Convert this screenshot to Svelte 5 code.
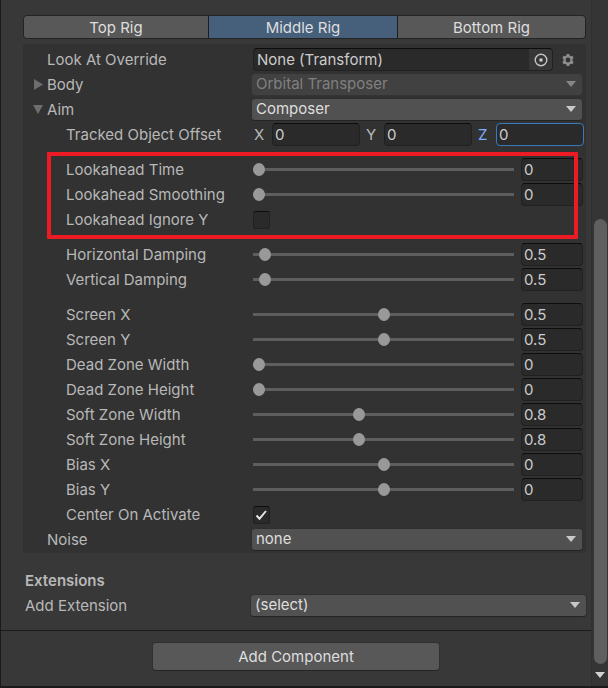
<script lang="ts">
  type Slider = { label: string; min: number; max: number; value: number }

  let tabs = ['Top Rig', 'Middle Rig', 'Bottom Rig']
  let activeTab = $state('Middle Rig')

  let offset = $state([
    { axis: 'X', value: '0' },
    { axis: 'Y', value: '0' },
    { axis: 'Z', value: '0' },
  ])
  let activeAxis = $state('Z')

  let lookahead: Slider[] = $state([
    { label: 'Lookahead Time', min: 0, max: 1, value: 0 },
    { label: 'Lookahead Smoothing', min: 0, max: 30, value: 0 },
  ])
  let damping: Slider[] = $state([
    { label: 'Horizontal Damping', min: 0, max: 20, value: 0.5 },
    { label: 'Vertical Damping', min: 0, max: 20, value: 0.5 },
  ])
  let zones: Slider[] = $state([
    { label: 'Screen X', min: -0.5, max: 1.5, value: 0.5 },
    { label: 'Screen Y', min: -0.5, max: 1.5, value: 0.5 },
    { label: 'Dead Zone Width', min: 0, max: 2, value: 0 },
    { label: 'Dead Zone Height', min: 0, max: 2, value: 0 },
    { label: 'Soft Zone Width', min: 0, max: 2, value: 0.8 },
    { label: 'Soft Zone Height', min: 0, max: 2, value: 0.8 },
    { label: 'Bias X', min: -0.5, max: 0.5, value: 0 },
    { label: 'Bias Y', min: -0.5, max: 0.5, value: 0 },
  ])
  let ignoreY = $state(false)
  let centerOnActivate = $state(true)

  // part of the inspector that is visible, in percent
  let visible = 67
</script>

{#snippet slider(s: Slider)}
  {@const id = s.label.toLowerCase().replaceAll(' ', '-')}
  <div class="row">
    <label class="sub" for={id}>{s.label}</label>
    <div class="slider">
      <input type="range" {id} min={s.min} max={s.max} step="0.01" bind:value={s.value} />
      <input class="field" aria-label="{s.label} value" bind:value={s.value} />
    </div>
  </div>
{/snippet}

{#snippet dropdown(id: string, text: string, disabled: boolean)}
  <div class="dropdown" class:disabled>
    <select {id} {disabled}><option>{text}</option></select>
    <svg width="10" height="6" viewBox="0 0 10 6"><path d="M0 0h10L5 6z" /></svg>
  </div>
{/snippet}

{#snippet checkmark()}
  <svg width="17" height="18" viewBox="0 0 17 18">
    <path d="M3.5 9.5l3 3.2L13 5" fill="none" stroke="#e8e8e8" stroke-width="1.9" />
  </svg>
{/snippet}

<div class="window">
  <main>
    <div class="content">
      <div class="tabs">
        {#each tabs as tab}
          <button class:active={tab == activeTab} onclick={() => (activeTab = tab)}>{tab}</button>
        {/each}
      </div>

      <section class="panel">
        <div class="row">
          <label for="look-at">Look At Override</label>
          <div class="object">
            <div class="picker">
              <input id="look-at" value="None (Transform)" readonly />
              <button aria-label="Pick object">
                <svg width="14" height="14" viewBox="0 0 14 14">
                  <circle cx="7" cy="7" r="5.8" fill="none" stroke="#c4c4c4" stroke-width="1.4" />
                  <rect x="5.5" y="5.5" width="3" height="3" fill="#d2d2d2" />
                </svg>
              </button>
            </div>
            <button class="gear" aria-label="Options">
              <svg width="12" height="12" viewBox="0 0 12 12">
                <path
                  fill="#8c8c8c"
                  fill-rule="evenodd"
                  d="M4.7 0h2.6l.4 1.6 1 .6 1.7-.5 1.3 2.2L10.5 5v2l1.2 1.1-1.3 2.2-1.7-.5-1 .6L7.3 12H4.7l-.4-1.6-1-.6-1.7.5L.3 8.1 1.5 7V5L.3 3.9l1.3-2.2 1.7.5 1-.6zM6 3.6a2.4 2.4 0 1 0 0 4.8 2.4 2.4 0 0 0 0-4.8z"
                />
              </svg>
            </button>
          </div>
        </div>
        <div class="row">
          <div class="foldout">
            <button aria-label="Expand Body" aria-expanded="false">
              <svg width="10" height="12" viewBox="0 0 10 12"><path d="M1 0l9 5.5L1 11z" /></svg>
            </button>
            <label for="body">Body</label>
          </div>
          {@render dropdown('body', 'Orbital Transposer', true)}
        </div>
        <div class="row">
          <div class="foldout">
            <button aria-label="Collapse Aim" aria-expanded="true">
              <svg width="10" height="12" viewBox="0 0 10 12"><path d="M0 1h10L5 10z" /></svg>
            </button>
            <label for="aim">Aim</label>
          </div>
          {@render dropdown('aim', 'Composer', false)}
        </div>
        <div class="row">
          <span class="sub">Tracked Object Offset</span>
          <div class="vector">
            {#each offset as o}
              <label class:active={o.axis == activeAxis}>
                <span>{o.axis}</span>
                <input class="field" bind:value={o.value} onfocus={() => (activeAxis = o.axis)} />
              </label>
            {/each}
          </div>
        </div>

        <div class="group marked">
          {#each lookahead as s}
            {@render slider(s)}
          {/each}
          <div class="row">
            <label class="sub" for="ignore-y">Lookahead Ignore Y</label>
            <div class="check">
              <input type="checkbox" id="ignore-y" bind:checked={ignoreY} />
              {#if ignoreY}{@render checkmark()}{/if}
            </div>
          </div>
        </div>

        <div class="group">
          {#each damping as s}
            {@render slider(s)}
          {/each}
        </div>

        <div class="group">
          {#each zones as s}
            {@render slider(s)}
          {/each}
          <div class="row">
            <label class="sub" for="center">Center On Activate</label>
            <div class="check">
              <input type="checkbox" id="center" bind:checked={centerOnActivate} />
              {#if centerOnActivate}{@render checkmark()}{/if}
            </div>
          </div>
        </div>

        <div class="row">
          <label for="noise">Noise</label>
          {@render dropdown('noise', 'none', false)}
        </div>
      </section>

      <section class="extensions">
        <h2>Extensions</h2>
        <div class="row">
          <label for="extension">Add Extension</label>
          {@render dropdown('extension', '(select)', false)}
        </div>
      </section>
    </div>

    <footer>
      <button>Add Component</button>
    </footer>
  </main>

  <div class="scrollbar">
    <div class="track">
      <div class="thumb" style="height: {visible}%"></div>
    </div>
    <button aria-label="Scroll down">
      <svg width="10" height="6" viewBox="0 0 10 6"><path d="M0 0h10L5 6z" fill="#d2d2d2" /></svg>
    </button>
  </div>
</div>

<style>
  :global(body) {
    margin: 0;
    background: #383838;
  }

  .window {
    display: flex;
    box-sizing: border-box;
    min-height: 100vh;
    border-left: 1px solid #1a1a1a;
    border-bottom: 2px solid #1c191a;
    color: #b8b8b8;
    font: 15px/20px Inter, 'Liberation Sans', sans-serif;
  }

  button,
  input,
  select {
    box-sizing: border-box;
    margin: 0;
    padding: 0;
    border: 0;
    background: none;
    color: inherit;
    font: inherit;
    outline: none;
  }

  svg {
    display: block;
  }

  main {
    flex: 1;
    min-width: 0;
    border-right: 1px solid #303030;
  }

  .content {
    padding: 15px 5px 12px 22px;
    border-bottom: 1px solid #1a1a1a;
  }

  .tabs {
    display: grid;
    grid-template-columns: 184fr 188fr 187fr;
    gap: 1px;
    height: 24px;
    box-sizing: border-box;
    border: 1px solid #242424;
    border-radius: 4px;
    background: #1e1e1e;
    overflow: hidden;
  }

  .tabs button {
    padding-top: 2px;
    background: #585858;
    color: #dedede;
  }

  .tabs button.active {
    background: #46607c;
  }

  .panel {
    margin-top: 5px;
    padding: 3px 3px 1px 0;
    background: #323232;
  }

  .row {
    display: grid;
    grid-template-columns: 230px 1fr;
    align-items: center;
    height: 25px;
  }

  .row > label,
  .row > span {
    padding-left: 24px;
  }

  .row > .sub {
    padding-left: 43px;
  }

  .foldout {
    display: flex;
    align-items: center;
    gap: 4px;
    padding-left: 10px;
  }

  .foldout svg {
    fill: #6e6e6e;
  }

  .group {
    position: relative;
    margin: 10px 0;
  }

  .group + .row {
    margin-top: -10px;
  }

  .marked::after {
    content: '';
    position: absolute;
    inset: -5px 5px -7px 24px;
    border: 4px solid #ed1c24;
    border-radius: 1px;
    pointer-events: none;
  }

  .field,
  .picker {
    height: 23px;
    border: 1px solid #212121;
    border-top-color: #0d0d0d;
    border-radius: 4px;
    background: #2a2a2a;
    color: #cccccc;
  }

  .field {
    width: 100%;
    min-width: 0;
    padding: 0 2px;
  }

  .object {
    display: flex;
    align-items: center;
    gap: 9px;
  }

  .picker {
    display: flex;
    flex: 1;
    box-sizing: border-box;
    overflow: hidden;
  }

  .picker input {
    flex: 1;
    min-width: 0;
    padding-left: 3px;
  }

  .picker button {
    display: grid;
    place-items: center;
    width: 23px;
    background: #373737;
  }

  .gear {
    margin-right: 9px;
  }

  .dropdown {
    display: grid;
    align-items: center;
    margin-left: -2px;
    color: #dedede;
  }

  .dropdown select {
    grid-area: 1 / 1;
    width: 100%;
    height: 23px;
    padding: 0 24px 1px 4px;
    border: 1px solid #303030;
    border-bottom-color: #242424;
    border-radius: 4px;
    background: #515151;
    appearance: none;
  }

  .dropdown svg {
    grid-area: 1 / 1;
    justify-self: end;
    margin: 0 7px 2px 0;
    fill: #c9c9c9;
    pointer-events: none;
  }

  .disabled select {
    border-color: #343434;
    background: #414141;
    color: #808080;
    opacity: 1;
  }

  .disabled svg {
    fill: #868686;
  }

  .vector {
    display: flex;
    gap: 5px;
    margin-right: -1px;
  }

  .vector label {
    display: flex;
    flex: 1;
    align-items: center;
  }

  .vector span {
    flex: 0 0 19px;
    box-sizing: border-box;
    padding-left: 1px;
  }

  .vector .active span {
    color: #7baefa;
  }

  .vector .active .field {
    border-color: #3a79bb;
  }

  .slider {
    display: grid;
    grid-template-columns: 1fr 62px;
    gap: 7px;
    align-items: center;
  }

  .slider input[type='range'] {
    width: 100%;
    min-width: 0;
    height: 13px;
    background: linear-gradient(#5e5e5e, #5e5e5e) center / 100% 3px no-repeat;
    appearance: none;
  }

  .slider input[type='range']::-webkit-slider-thumb {
    width: 12px;
    height: 13px;
    border-radius: 50%;
    background: #999999;
    appearance: none;
  }

  .check {
    display: grid;
    justify-content: start;
  }

  .check input {
    grid-area: 1 / 1;
    width: 17px;
    height: 18px;
    border: 1px solid #212121;
    border-top-color: #0d0d0d;
    border-radius: 3px;
    background: #2a2a2a;
    appearance: none;
  }

  .check svg {
    grid-area: 1 / 1;
    pointer-events: none;
  }

  .extensions {
    padding-top: 15px;
  }

  .extensions h2 {
    margin: 0;
    padding-left: 2px;
    font-size: 15px;
    font-weight: 600;
    line-height: 25px;
  }

  .extensions .row {
    grid-template-columns: 229px 1fr;
    margin-right: -1px;
  }

  .extensions .row > label {
    padding-left: 2px;
  }

  footer {
    display: flex;
    justify-content: center;
    padding: 11px 0 15px;
  }

  footer button {
    width: 288px;
    height: 29px;
    border: 1px solid #303030;
    border-bottom-color: #242424;
    border-radius: 4px;
    background: #585858;
    color: #dedede;
  }

  .scrollbar {
    display: flex;
    flex-direction: column;
    width: 16px;
    background: #353535;
  }

  .track {
    display: flex;
    flex: 1;
    align-items: flex-end;
    padding: 0 1px 0 2px;
  }

  .thumb {
    width: 100%;
    border-radius: 7px;
    background: #5f5f5f;
  }

  .scrollbar button {
    display: grid;
    place-items: center;
    height: 22px;
  }
</style>
